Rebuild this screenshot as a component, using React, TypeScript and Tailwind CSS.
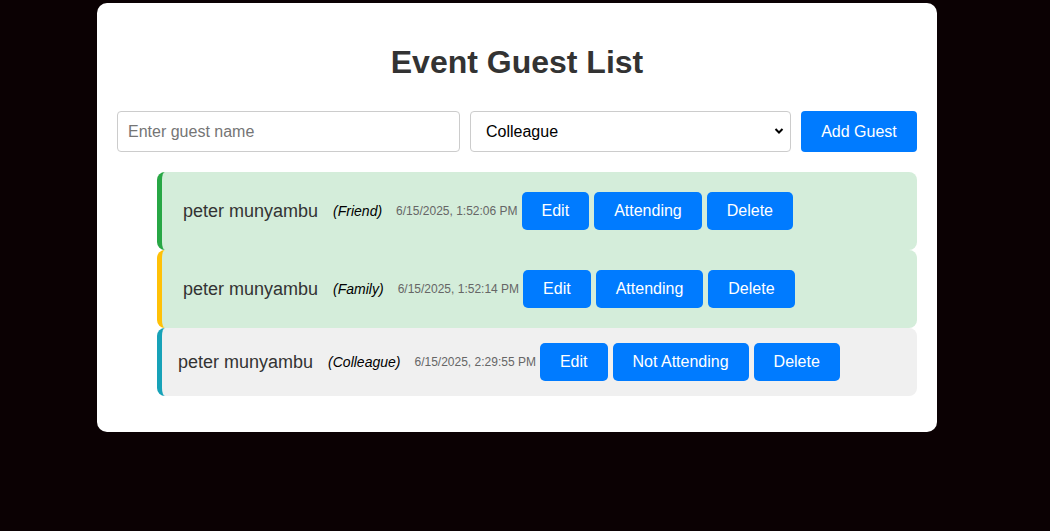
import React from "react";

type Guest = {
  name: string;
  category: string;
  time: string;
  attending: boolean;
  border: string;
};

const guests: Guest[] = [
  { name: "peter munyambu", category: "Friend", time: "6/15/2025, 1:52:06 PM", attending: true, border: "border-l-[#28a745]" },
  { name: "peter munyambu", category: "Family", time: "6/15/2025, 1:52:14 PM", attending: true, border: "border-l-[#ffc107]" },
  { name: "peter munyambu", category: "Colleague", time: "6/15/2025, 2:29:55 PM", attending: false, border: "border-l-[#17a2b8]" },
];

const btn =
  "rounded-[5px] bg-[#007bff] px-[20px] py-[10px] text-[16px] leading-[18px] text-white";

export default function App() {
  return (
    <div
      className="min-h-[531px] w-full bg-[#0b0103] pt-[3px]"
      style={{ fontFamily: '"Liberation Sans", Arial, sans-serif' }}
    >
      <div className="ml-[97px] w-[840px] rounded-[10px] bg-white p-[20px]">
        <h1 className="mt-[21px] mb-[30px] text-center text-[32px] leading-[37px] font-bold text-[#333]">
          Event Guest List
        </h1>
        <div className="flex gap-[10px]">
          <input
            className="h-[41px] w-[343px] rounded-[4px] border border-[#ccc] px-[10px] text-[16px] text-[#333] placeholder:text-[#757575] outline-none"
            placeholder="Enter guest name"
          />
          <div className="relative h-[41px] w-[321px] rounded-[4px] border border-[#ccc] bg-white">
            <span className="absolute left-[15px] top-[10px] text-[16px] leading-[19px] text-black">Colleague</span>
            <svg className="absolute right-[6px] top-[15px]" width="10" height="8" viewBox="0 0 10 8">
              <path d="M1.5 2 L5 5.5 L8.5 2" fill="none" stroke="#000" strokeWidth="2" />
            </svg>
          </div>
          <button className="h-[41px] w-[116px] rounded-[4px] bg-[#007bff] text-[16px] text-white">
            Add Guest
          </button>
        </div>
        <ul className="mt-[20px] mb-[16px] pl-[40px]">
          {guests.map((g, i) => (
            <li
              key={i}
              className={`flex items-center rounded-[8px] border-l-[5px] ${g.border} ${
                g.attending ? "bg-[#d4edda] pl-[21px] pr-[20px] py-[20px]" : "bg-[#f0f0f0] pl-[16px] pr-[15px] py-[15px]"
              }`}
            >
              <span className="text-[18px] leading-[21px] text-[#333]">{g.name}</span>
              <span className="ml-[15px] text-[14px] italic text-black">({g.category})</span>
              <span className="ml-[14px] text-[12px] text-[#666]">{g.time}</span>
              <div className="ml-[4px] flex gap-[5px]">
                <button className={btn}>Edit</button>
                <button className={btn}>{g.attending ? "Attending" : "Not Attending"}</button>
                <button className={btn}>Delete</button>
              </div>
            </li>
          ))}
        </ul>
      </div>
    </div>
  );
}
